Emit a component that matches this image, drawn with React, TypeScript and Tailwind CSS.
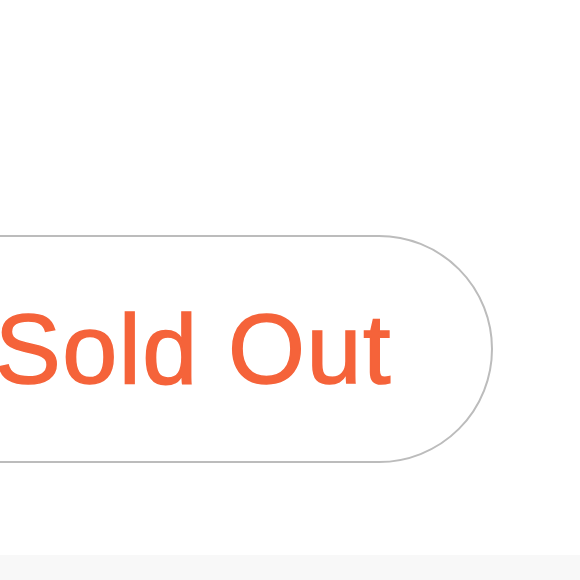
import React from 'react';

const App: React.FC = () => {
  return (
    <div className="w-[580px] h-[580px] overflow-hidden bg-white flex flex-col">
      <div className="flex-1 pt-[235px]">
        <div className="ml-[-112px] w-[605px] h-[228px] rounded-full border-2 border-[#bcbcbc] flex items-center justify-end pr-[99px]">
          <span
            className="text-[99px] font-normal leading-none tracking-[1.5px] text-[#f5633a] pb-[2px] [-webkit-text-stroke:1.5px_#f5633a] whitespace-nowrap"
            style={{ fontFamily: '"Liberation Sans", Arial, sans-serif' }}
          >
            Sold Out
          </span>
        </div>
      </div>
      <div className="h-[25px] bg-[#f8f8f8]" />
    </div>
  );
};

export default App;
